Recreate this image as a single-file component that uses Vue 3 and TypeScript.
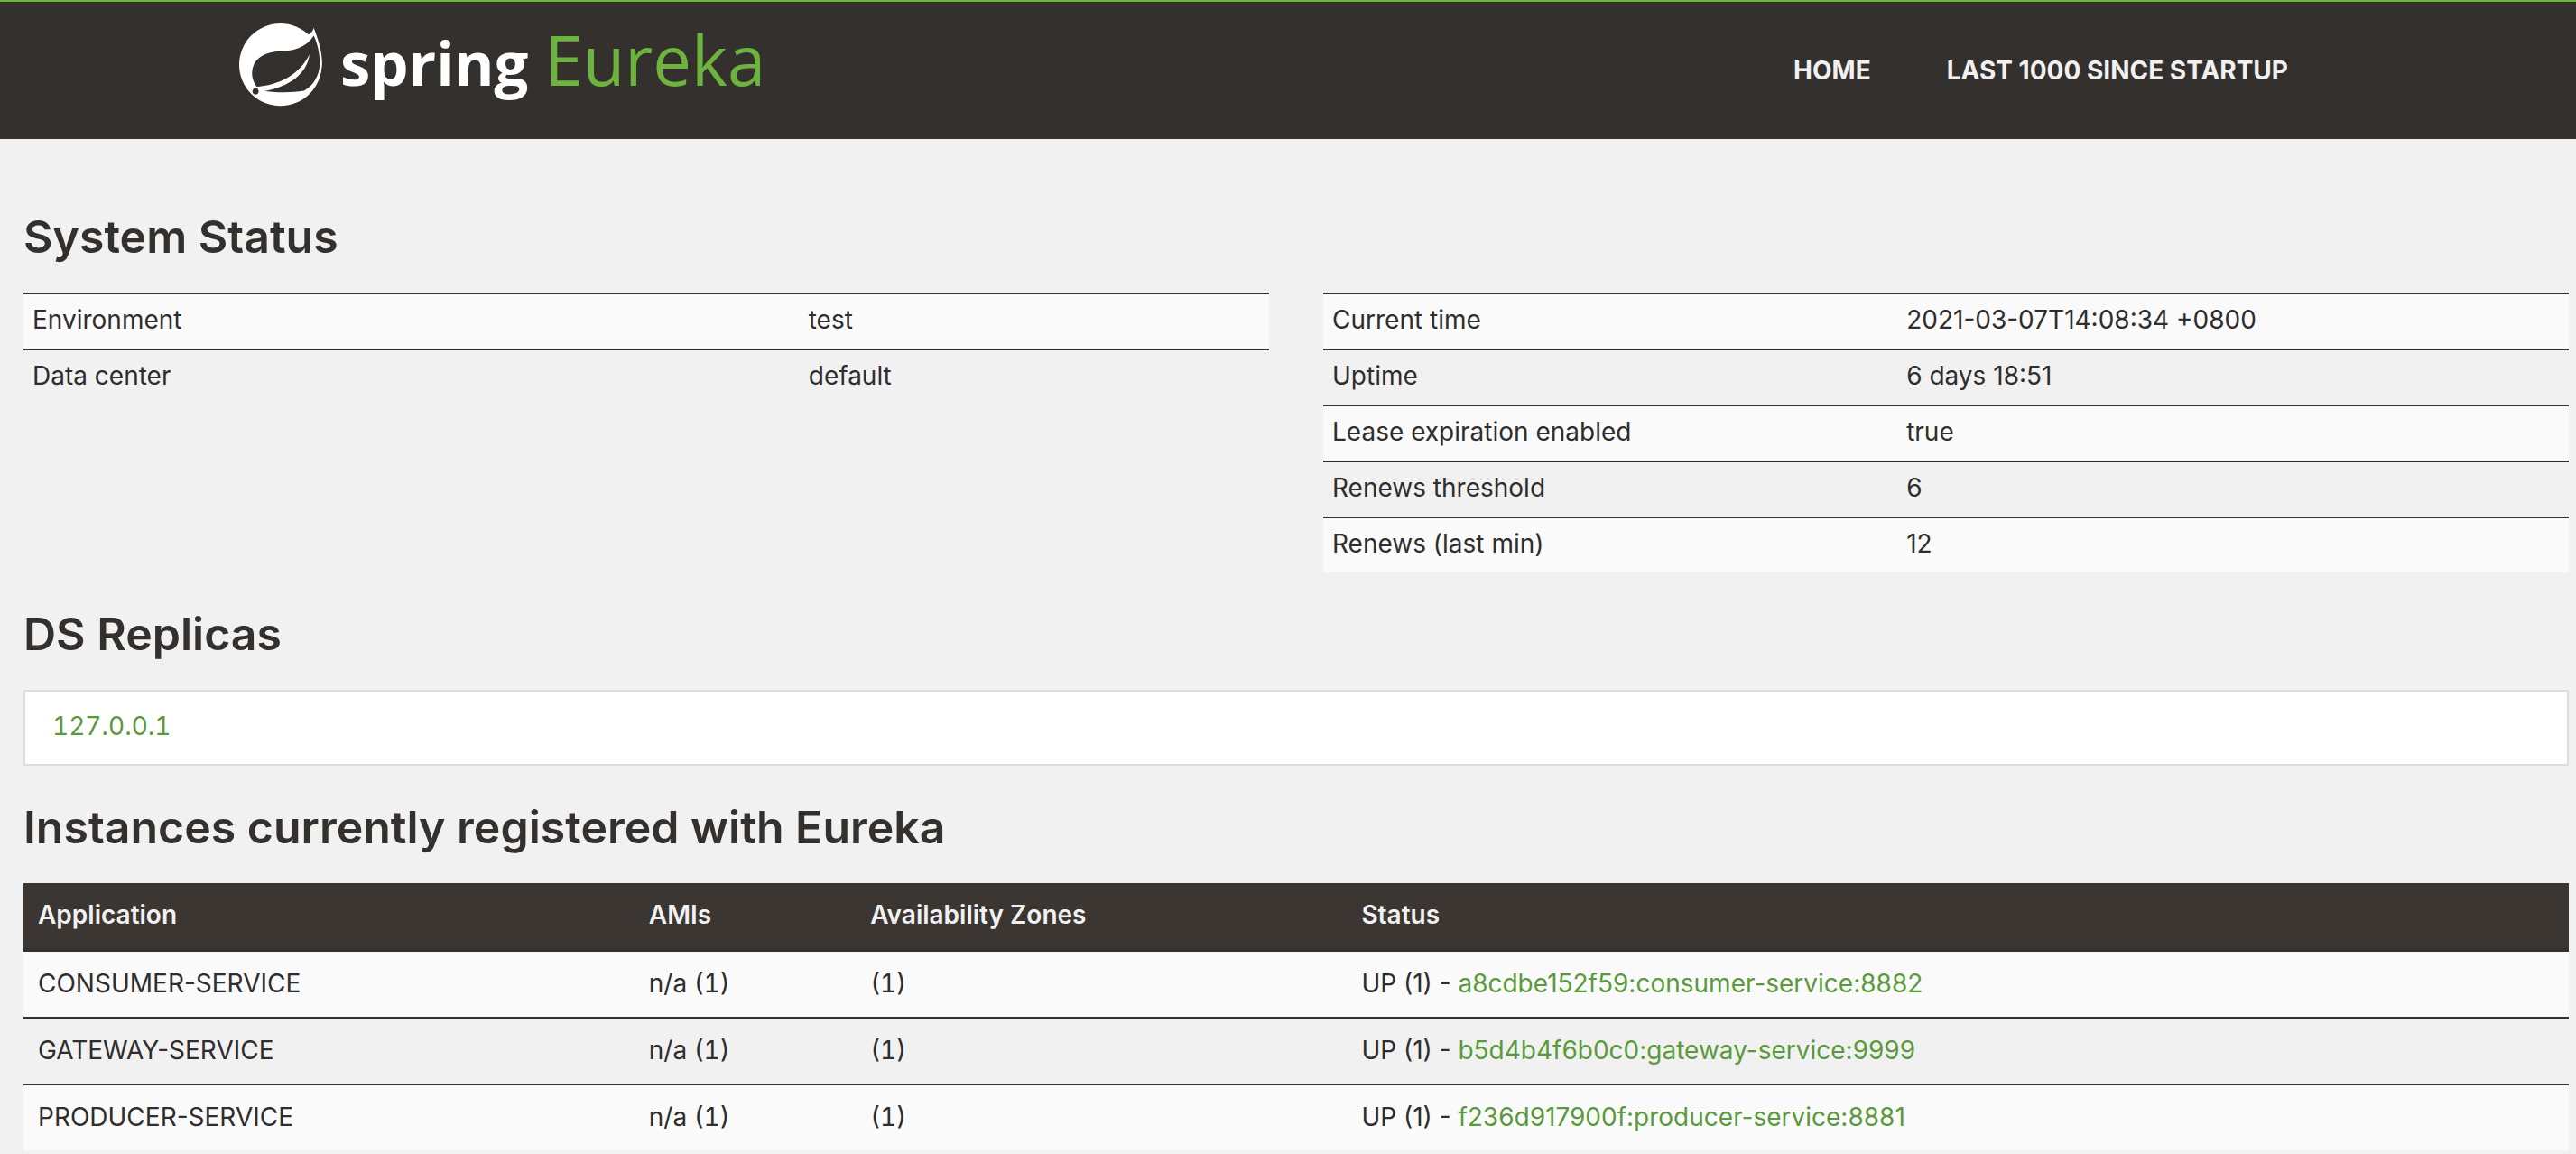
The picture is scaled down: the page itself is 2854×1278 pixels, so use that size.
<script setup lang="ts">
interface Fact {
  label: string
  value: string
}

interface Instance {
  app: string
  amis: string
  zones: string
  status: string
  id: string
}

const environment: Fact[] = [
  { label: 'Environment', value: 'test' },
  { label: 'Data center', value: 'default' },
]

const runtime: Fact[] = [
  { label: 'Current time', value: '2021-03-07T14:08:34 +0800' },
  { label: 'Uptime', value: '6 days 18:51' },
  { label: 'Lease expiration enabled', value: 'true' },
  { label: 'Renews threshold', value: '6' },
  { label: 'Renews (last min)', value: '12' },
]

const replicas: string[] = ['127.0.0.1']

const instances: Instance[] = [
  { app: 'CONSUMER-SERVICE', amis: 'n/a (1)', zones: '(1)', status: 'UP (1) - ', id: 'a8cdbe152f59:consumer-service:8882' },
  { app: 'GATEWAY-SERVICE', amis: 'n/a (1)', zones: '(1)', status: 'UP (1) - ', id: 'b5d4b4f6b0c0:gateway-service:9999' },
  { app: 'PRODUCER-SERVICE', amis: 'n/a (1)', zones: '(1)', status: 'UP (1) - ', id: 'f236d917900f:producer-service:8881' },
]
</script>

<template>
  <div class="page">
    <header class="navbar">
      <div class="navbar-inner">
        <a class="brand" href="#" aria-label="Spring Eureka">
          <svg class="leaf" viewBox="18 18 274 274" aria-hidden="true">
            <circle cx="154" cy="154" r="136" fill="#fff" />
            <path d="M240 58C254 52 261 44 264 32C281 75 294 122 291 158C287 198 270 230 243 247Z" fill="#fff" />
            <path d="M264 58C246 88 212 105 172 108C120 109 84 120 67 152C55 180 60 206 77 228L104 241C150 247 195 246 232 240C264 222 282 190 284 152C284 112 275 82 264 58Z" fill="#34302d" />
            <path d="M72 227C150 222 218 186 250 120C243 182 184 228 100 241L84 244Z" fill="#fff" />
            <circle cx="72" cy="242" r="10" fill="#34302d" />
          </svg>
          <span class="wordmark"><span class="spring">spring</span><span class="eureka">Eureka</span></span>
        </a>
        <nav class="links">
          <a href="#">HOME</a>
          <a href="#">LAST 1000 SINCE STARTUP</a>
        </nav>
      </div>
    </header>

    <main class="content">
      <h1>System Status</h1>
      <div class="status">
        <table class="facts">
          <colgroup>
            <col class="environment-label">
            <col>
          </colgroup>
          <tbody>
            <tr v-for="fact in environment" :key="fact.label">
              <td>{{ fact.label }}</td>
              <td>{{ fact.value }}</td>
            </tr>
          </tbody>
        </table>
        <table class="facts">
          <colgroup>
            <col class="runtime-label">
            <col>
          </colgroup>
          <tbody>
            <tr v-for="fact in runtime" :key="fact.label">
              <td>{{ fact.label }}</td>
              <td>{{ fact.value }}</td>
            </tr>
          </tbody>
        </table>
      </div>

      <h1>DS Replicas</h1>
      <ul class="replicas">
        <li v-for="host in replicas" :key="host"><a href="#">{{ host }}</a></li>
      </ul>

      <h1>Instances currently registered with Eureka</h1>
      <table class="instances">
        <colgroup>
          <col class="app">
          <col class="amis">
          <col class="zones">
          <col>
        </colgroup>
        <thead>
          <tr>
            <th>Application</th>
            <th>AMIs</th>
            <th>Availability Zones</th>
            <th>Status</th>
          </tr>
        </thead>
        <tbody>
          <tr v-for="item in instances" :key="item.app">
            <td>{{ item.app }}</td>
            <td class="count">{{ item.amis }}</td>
            <td class="count">{{ item.zones }}</td>
            <td>{{ item.status }}<a href="#">{{ item.id }}</a></td>
          </tr>
        </tbody>
      </table>
    </main>
  </div>
</template>

<style>
body {
  margin: 0;
  background: #f1f1f1;
}
</style>

<style scoped>
.page {
  color: #2f2d2d;
  font-family: Inter, "Noto Sans", sans-serif;
  font-size: 28px;
  line-height: 40px;
}

a {
  color: #5b9a3c;
  text-decoration: none;
}

.navbar {
  box-sizing: border-box;
  height: 154px;
  border-top: 2px solid #6db33f;
  background: #34302d;
}

.navbar-inner {
  box-sizing: border-box;
  display: flex;
  justify-content: space-between;
  align-items: flex-start;
  max-width: 2340px;
  margin: 0 auto;
  padding: 24px 62px 0 8px;
}

.brand {
  display: flex;
  align-items: flex-start;
  font-family: "Open Sans", "Noto Sans", sans-serif;
}

.leaf {
  width: 92px;
  height: 92px;
}

.wordmark {
  margin-left: 20px;
  line-height: 80px;
}

.spring {
  color: #fff;
  font-size: 67px;
  font-weight: 700;
}

.eureka {
  margin-left: 18px;
  color: #6db33f;
  font-size: 76px;
  font-weight: 500;
}

.links {
  display: flex;
  gap: 84px;
  padding-top: 32px;
}

.links a {
  color: #f1f1f1;
  font-weight: 700;
}

.content {
  padding: 76px 8px 4px 26px;
}

h1 {
  margin: 0;
  padding-bottom: 30px;
  font-size: 50px;
  font-weight: 600;
  line-height: 64px;
  color: #34302d;
}

.status {
  display: flex;
  align-items: flex-start;
  gap: 60px;
  margin-bottom: 36px;
}

table {
  width: 100%;
  border-collapse: separate;
  border-spacing: 0;
  table-layout: fixed;
}

.facts {
  flex: 1;
}

.facts td {
  padding: 8px 10px 12px;
  border-top: 2px solid #34302d;
}

.environment-label {
  width: 62.3%;
}

.runtime-label {
  width: 46.1%;
}

tbody tr:nth-child(odd) {
  background: #fafafa;
}

.replicas {
  margin: 0 0 36px;
  padding: 0;
  border: 2px solid #ddd;
  background: #fff;
  font-variant-numeric: tabular-nums;
  list-style: none;
}

.replicas li {
  padding: 18px 30px 22px;
}

.instances th {
  padding: 15px 16px 17px;
  border-bottom: 4px solid #34302d;
  background: #3b3631;
  color: #f1f1f1;
  font-weight: 600;
  text-align: left;
}

.instances td {
  padding: 15px 16px 17px;
}

.instances tbody tr + tr td {
  border-top: 2px solid #34302d;
}

.count {
  font-variant-numeric: tabular-nums;
}

.app {
  width: 24%;
}

.amis {
  width: 8.7%;
}

.zones {
  width: 19.3%;
}
</style>
